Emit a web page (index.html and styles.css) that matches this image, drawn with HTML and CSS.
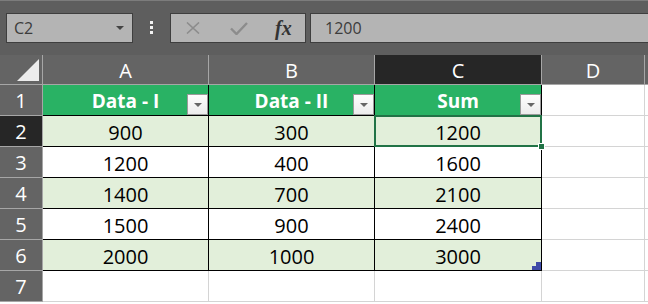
FILE: index.html
```html
<!DOCTYPE html>
<html lang="en">
<head>
    <meta charset="UTF-8">
    <meta name="viewport" content="width=device-width, initial-scale=1.0">
    <title>Sum of two columns</title>
    <link rel="stylesheet" href="styles.css">
</head>
<body>

    <div class="formula-bar">
        <div class="name-box">
            <span>C2</span>
            <span class="caret"></span>
        </div>
        <div class="grip"><i></i><i></i><i></i></div>
        <div class="fx-box">
            <svg class="icon" width="16" height="12" viewBox="0 0 16 12">
                <path d="M2 0.5 L14 11.5 M14 0.5 L2 11.5" stroke="#8c8c8c" stroke-width="1.6" fill="none"/>
            </svg>
            <svg class="icon" width="18" height="13" viewBox="0 0 18 13">
                <path d="M1 6.5 L6.5 12 L17 1" stroke="#8c8c8c" stroke-width="2.4" fill="none"/>
            </svg>
            <span class="fx">fx</span>
        </div>
        <div class="formula">1200</div>
    </div>

    <div class="sheet">
        <div class="corner"><span class="tri"></span></div>
        <div class="col-head">A</div>
        <div class="col-head">B</div>
        <div class="col-head active">C</div>
        <div class="col-head">D</div>
        <div class="col-head last"></div>

        <div class="row-head">1</div>
        <div class="cell th">Data - I<span class="filter"></span></div>
        <div class="cell th">Data - II<span class="filter"></span></div>
        <div class="cell th edge">Sum<span class="filter"></span></div>
        <div class="cell grid"></div>
        <div class="cell grid last"></div>

        <div class="row-head active">2</div>
        <div class="cell band">900</div>
        <div class="cell band">300</div>
        <div class="cell band edge selected">1200</div>
        <div class="cell grid"></div>
        <div class="cell grid last"></div>

        <div class="row-head">3</div>
        <div class="cell">1200</div>
        <div class="cell">400</div>
        <div class="cell edge">1600</div>
        <div class="cell grid"></div>
        <div class="cell grid last"></div>

        <div class="row-head">4</div>
        <div class="cell band">1400</div>
        <div class="cell band">700</div>
        <div class="cell band edge">2100</div>
        <div class="cell grid"></div>
        <div class="cell grid last"></div>

        <div class="row-head">5</div>
        <div class="cell">1500</div>
        <div class="cell">900</div>
        <div class="cell edge">2400</div>
        <div class="cell grid"></div>
        <div class="cell grid last"></div>

        <div class="row-head">6</div>
        <div class="cell band">2000</div>
        <div class="cell band">1000</div>
        <div class="cell band edge resize">3000</div>
        <div class="cell grid"></div>
        <div class="cell grid last"></div>

        <div class="row-head">7</div>
        <div class="cell grid"></div>
        <div class="cell grid"></div>
        <div class="cell grid"></div>
        <div class="cell grid"></div>
        <div class="cell grid last"></div>
    </div>

</body>
</html>
```

FILE: styles.css
```css
body { margin: 0; background: #fff; font-family: "Open Sans", Arial, sans-serif; overflow: hidden; }

/* formula bar */
.formula-bar { height: 55px; box-sizing: border-box; background: #5e5e5e; border-top: 1px solid #7c7c7c; display: flex; align-items: flex-start; padding: 12px 0 0 6px; }
.name-box { width: 127px; height: 30px; box-sizing: border-box; background: #b4b4b4; border: 1px solid #3e3e3e; display: flex; align-items: center; justify-content: space-between; padding: 0 8px 0 7px; font-size: 16px; color: #3c3c3c; }
.caret { width: 0; height: 0; border-left: 4px solid transparent; border-right: 4px solid transparent; border-top: 4px solid #444; }
.grip { width: 37px; display: flex; flex-direction: column; align-items: center; gap: 2px; padding-top: 8px; }
.grip i { display: block; width: 3px; height: 3px; background: #f2f2f2; }
.fx-box { width: 136px; height: 30px; box-sizing: border-box; background: #b4b4b4; border: 1px solid #3e3e3e; display: flex; align-items: center; padding-left: 14px; }
.fx-box .icon { margin-right: 29px; }
.fx-box .icon + .icon { margin-right: 27px; }
.fx { font-family: "Liberation Serif", serif; font-style: italic; font-weight: bold; font-size: 20px; color: #333; }
.formula { flex: 1; height: 30px; box-sizing: border-box; margin-left: 4px; margin-right: -2px; background: #b4b4b4; border: 1px solid #3e3e3e; font-size: 16px; color: #3c3c3c; line-height: 28px; padding-left: 14px; }

/* sheet */
.sheet { display: grid; grid-template-columns: 43px 166px 166px 167px 103px 1fr; grid-template-rows: 30px repeat(7, 31px); }
.sheet > div { box-sizing: border-box; }
.corner { background: #646464; border-right: 1px solid #a6a6a6; border-bottom: 1px solid #a6a6a6; position: relative; }
.tri { position: absolute; right: 3px; bottom: 3px; width: 0; height: 0; border-left: 22px solid transparent; border-bottom: 22px solid #ececec; }
.col-head { background: #646464; color: #fff; font-size: 20px; display: flex; align-items: center; justify-content: center; border-right: 1px solid #a6a6a6; border-bottom: 1px solid #a6a6a6; padding-top: 2px; }
.col-head.active { background: #262626; }
.col-head.last { border-right: none; }
.row-head { background: #646464; color: #fff; font-size: 20px; display: flex; align-items: center; justify-content: center; border-right: 1px solid #a6a6a6; border-bottom: 1px solid #a6a6a6; }
.row-head.active { background: #262626; }

.cell { font-size: 20px; color: #000; display: flex; align-items: center; justify-content: center; border-right: 1px solid #000; border-bottom: 1px solid #000; position: relative; padding-top: 2px; }
.cell.band { background: #e2efda; }
.cell.th { background: #29b264; color: #fff; font-weight: bold; font-size: 19px; }
.cell.grid { border-right-color: #d4d4d4; border-bottom-color: #d4d4d4; }
.cell.last { border-right: none; }

.filter { position: absolute; right: 0; bottom: 0; width: 21px; height: 21px; box-sizing: border-box; background: linear-gradient(#fdfdfd, #ececec); border: 1px solid #9a9a9a; }
.filter::after { content: ""; position: absolute; left: 6px; top: 8px; border-left: 4px solid transparent; border-right: 4px solid transparent; border-top: 4px solid #666; }

.selected::after { content: ""; position: absolute; left: -1px; top: -1px; right: -1px; bottom: -1px; border: 2px solid #217346; }
.selected::before { content: ""; position: absolute; right: -4px; bottom: -4px; width: 5px; height: 5px; background: #217346; border: 1px solid #fff; z-index: 2; }

.resize::after { content: ""; position: absolute; right: 0; bottom: 0; width: 5px; height: 8px; background: #3f4ba8; }
.resize::before { content: ""; position: absolute; right: 0; bottom: 0; width: 9px; height: 4px; background: #3f4ba8; }
```
